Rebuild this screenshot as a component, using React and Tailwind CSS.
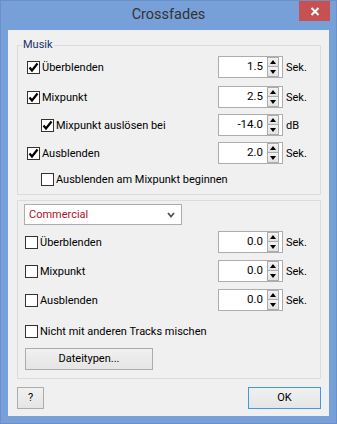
import React from "react";

const font = { fontFamily: 'Roboto, "Noto Sans", sans-serif' };

function Check({ checked }) {
  return (
    <span className="w-[13px] h-[13px] border border-[#333333] bg-white flex items-center justify-center shrink-0">
      {checked && (
        <svg width="11" height="11" viewBox="0 0 11 11">
          <path d="M1.5 5.5 L4 8.5 L9.5 1.5" fill="none" stroke="#000" strokeWidth="2.2" />
        </svg>
      )}
    </span>
  );
}

function Spin({ value }) {
  return (
    <div className="w-[65px] h-[22px] border border-[#abadb3] bg-white flex items-center">
      <span className="flex-1 text-right pr-[4px] text-[11.5px] text-black leading-none">{value}</span>
      <div className="flex flex-col w-[12px] h-[20px] mr-[3px]">
        <div className="h-[10px] border border-[#acacac] bg-gradient-to-b from-[#f2f2f2] to-[#e2e2e2] flex items-center justify-center">
          <svg width="6" height="4" viewBox="0 0 6 4"><path d="M3 0 L6 4 L0 4 Z" fill="#000" /></svg>
        </div>
        <div className="h-[10px] border border-[#acacac] border-t-0 bg-gradient-to-b from-[#f2f2f2] to-[#e2e2e2] flex items-center justify-center">
          <svg width="6" height="4" viewBox="0 0 6 4"><path d="M0 0 L6 0 L3 4 Z" fill="#000" /></svg>
        </div>
      </div>
    </div>
  );
}

function Row({ checked, label, value, unit, indent, mt }) {
  return (
    <div className={`flex items-center h-[22px] ${mt}`}>
      <div className={`flex items-center gap-[2px] flex-1 ${indent}`}>
        <Check checked={checked} />
        <span className="text-[11px] text-black leading-none">{label}</span>
      </div>
      {value !== undefined && <Spin value={value} />}
      {value !== undefined && (
        <span className="w-[37px] pl-[3px] text-[11px] text-black leading-none">{unit}</span>
      )}
    </div>
  );
}

function Btn({ children, className }) {
  return (
    <div
      className={`h-[22px] border bg-gradient-to-b from-[#f0f0f0] to-[#e5e5e5] flex items-center justify-center text-[11px] text-black ${className}`}
    >
      {children}
    </div>
  );
}

export default function App() {
  return (
    <div className="w-[337px] h-[424px] bg-[#78a0d8] border border-[#6a90c8] flex flex-col" style={font}>
      <div className="h-[29px] relative flex items-center justify-center">
        <span className="text-[14.5px] text-[#333333] leading-none">Crossfades</span>
        <div className="absolute right-[6px] top-0 w-[31px] h-[20px] bg-[#c75050] flex items-center justify-center">
          <svg width="10" height="9" viewBox="0 0 10 9">
            <path d="M1.5 1 L8.5 8 M8.5 1 L1.5 8" stroke="#fff" strokeWidth="2" />
          </svg>
        </div>
      </div>
      <div className="mx-[7px] h-[386px] bg-[#f0f0f0] pl-[9px] pr-[8px] pt-[15px] flex flex-col">
        {/* Musik */}
        <div className="relative border border-[#dcdcdc] h-[150px] flex flex-col pt-[10px]">
          <span className="absolute -top-[8px] left-[4px] px-[1px] bg-[#f0f0f0] text-[11px] text-[#1a2f6a] leading-[14px]">
            Musik
          </span>
          <Row checked label="Überblenden" value="1.5" unit="Sek." indent="pl-[9px]" mt="" />
          <Row checked label="Mixpunkt" value="2.5" unit="Sek." indent="pl-[9px]" mt="mt-[8px]" />
          <Row checked label="Mixpunkt auslösen bei" value="-14.0" unit="dB" indent="pl-[23px]" mt="mt-[6px]" />
          <Row checked label="Ausblenden" value="2.0" unit="Sek." indent="pl-[9px]" mt="mt-[6px]" />
          <Row label="Ausblenden am Mixpunkt beginnen" indent="pl-[23px]" mt="mt-[4px]" />
        </div>

        {/* Commercial */}
        <div className="border border-[#dcdcdc] mt-[5px] h-[179px] flex flex-col pt-[3px]">
          <div className="ml-[6px] w-[158px] h-[21px] border border-[#abadb3] bg-white flex items-center pl-[4px] pr-[6px]">
            <span className="flex-1 text-[11px] text-[#b0102a] leading-none">Commercial</span>
            <svg width="8" height="6" viewBox="0 0 8 6">
              <path d="M1 1 L4 4.5 L7 1" fill="none" stroke="#555" strokeWidth="1.8" />
            </svg>
          </div>
          <Row label="Überblenden" value="0.0" unit="Sek." indent="pl-[7px]" mt="mt-[6px]" />
          <Row label="Mixpunkt" value="0.0" unit="Sek." indent="pl-[7px]" mt="mt-[7px]" />
          <Row label="Ausblenden" value="0.0" unit="Sek." indent="pl-[7px]" mt="mt-[7px]" />
          <Row label="Nicht mit anderen Tracks mischen" indent="pl-[7px]" mt="mt-[9px]" />
          <Btn className="ml-[7px] mt-[6px] w-[128px] border-[#acacac]">Dateitypen...</Btn>
        </div>

        <div className="flex justify-between mt-[8px]">
          <Btn className="w-[27px] border-[#acacac]">?</Btn>
          <Btn className="w-[73px] border-[#3d9ae6]">OK</Btn>
        </div>
      </div>
    </div>
  );
}
